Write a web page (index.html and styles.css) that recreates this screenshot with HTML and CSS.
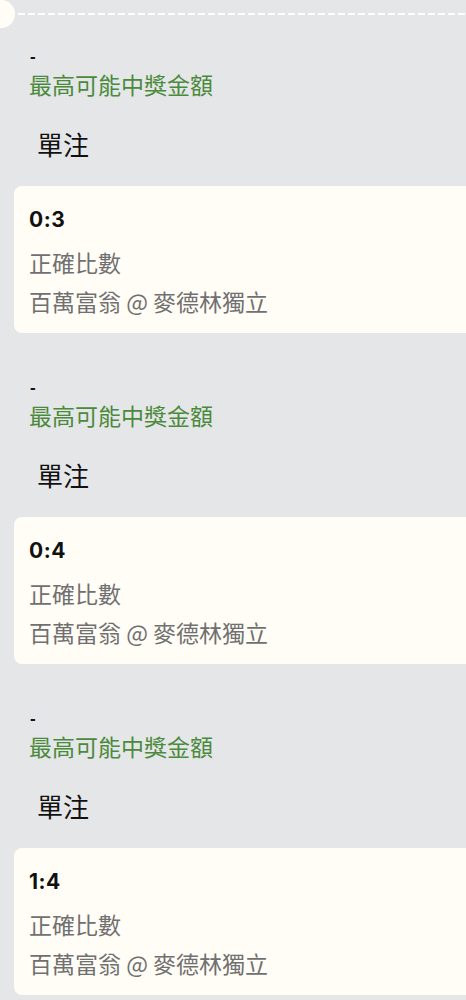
FILE: index.html
```html
<!DOCTYPE html>
<html lang="zh-Hant">
<head>
<meta charset="utf-8">
<title>Bets</title>
<link rel="stylesheet" href="styles.css">
</head>
<body>
<div class="divider">
  <span class="notch"></span>
  <span class="dash-line"></span>
</div>

<section class="block">
  <div class="max-val">-</div>
  <div class="max-label">最高可能中獎金額</div>
  <div class="bet-type">單注</div>
  <div class="card">
    <div class="score">0:3</div>
    <div class="market">正確比數</div>
    <div class="match">百萬富翁 @ 麥德林獨立</div>
  </div>
</section>

<section class="block">
  <div class="max-val">-</div>
  <div class="max-label">最高可能中獎金額</div>
  <div class="bet-type">單注</div>
  <div class="card">
    <div class="score">0:4</div>
    <div class="market">正確比數</div>
    <div class="match">百萬富翁 @ 麥德林獨立</div>
  </div>
</section>

<section class="block">
  <div class="max-val">-</div>
  <div class="max-label">最高可能中獎金額</div>
  <div class="bet-type">單注</div>
  <div class="card">
    <div class="score">1:4</div>
    <div class="market">正確比數</div>
    <div class="match">百萬富翁 @ 麥德林獨立</div>
  </div>
</section>
</body>
</html>
```

FILE: styles.css
```css
html, body {
  margin: 0;
  padding: 0;
}
body {
  background: #e5e6e8;
  font-family: "Noto Sans CJK TC", "Noto Sans", sans-serif;
  overflow-x: hidden;
  width: 466px;
}
.divider {
  display: flex;
  align-items: center;
  height: 28px;
}
.notch {
  flex: none;
  width: 28px;
  height: 28px;
  margin-left: -13px;
  border-radius: 50%;
  background: #fffdf6;
}
.dash-line {
  flex: 1;
  height: 2px;
  margin-left: 3px;
  background: repeating-linear-gradient(to right, #ffffff 0 7px, transparent 7px 10px);
}
.block {
  padding: 15px 0 0 0;
  margin-bottom: 26px;
}
.max-val {
  padding: 4px 0 0 30px;
  font-family: "Liberation Sans", "Noto Sans CJK TC", sans-serif;
  font-size: 17px;
  line-height: 20px;
  font-weight: 700;
  color: #111;
}
.max-label {
  padding-left: 29px;
  font-size: 23px;
  line-height: 34px;
  color: #4b8a3c;
}
.bet-type {
  margin-top: 26px;
  padding-left: 37px;
  font-size: 26px;
  line-height: 34px;
  color: #111;
}
.card {
  margin: 25px -20px 0 14px;
  padding: 20px 15px 12px 15px;
  background: #fffdf6;
  border-radius: 8px;
}
.score {
  font-family: "Inter", "Roboto", sans-serif;
  font-weight: 700;
  font-size: 21px;
  line-height: 28px;
  letter-spacing: 0.5px;
  color: #111;
}
.market,
.match {
  font-size: 23px;
  line-height: 39px;
  color: #707070;
}
.market {
  margin-top: 9px;
}
```
